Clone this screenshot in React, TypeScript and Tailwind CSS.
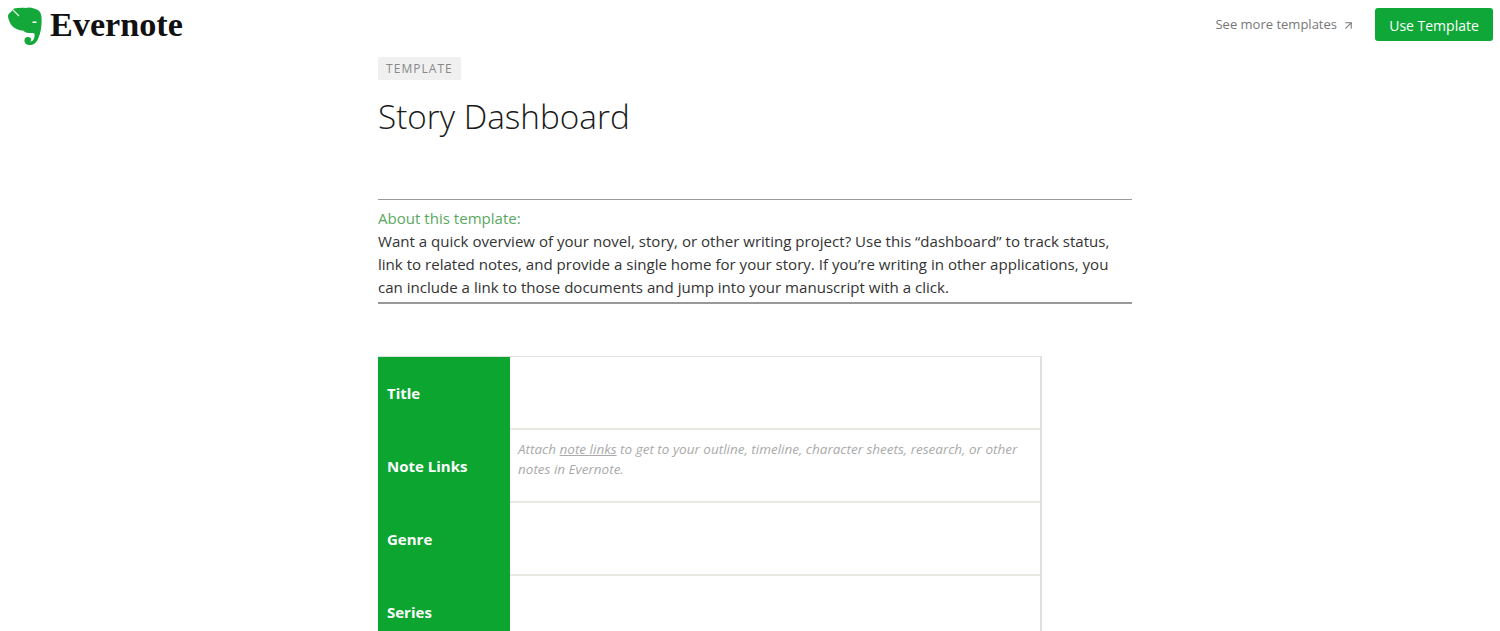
import { ArrowUpRight } from 'lucide-react';

const rows = [
  { label: 'Title' },
  { label: 'Note Links', note: true },
  { label: 'Genre' },
  { label: 'Series' },
];

function Logo() {
  return (
    <svg width="34" height="39" viewBox="0 0 34 39" className="shrink-0">
      <path
        d="M6 1.5 C10 .5 15 .5 18 1 C20 0 23 .5 26 1.5 C30 2.5 33 4 33.5 10 C34 17 33 26 30 32 C28 37 24 38.5 21 38 C17 37.5 15.5 34 17 31.5 C18.5 29.5 22 29.5 23 32 C23.5 33 23 34 22 34.5 C25 35 27 31 26.5 27 C26 25.5 24 26 21 26 C18 26 16 24.5 15 23.5 C11 23.5 6 21.5 3 17.5 C1 14 0 11 0 9 C0 7 1.5 6 3 5 Z"
        fill="#14a83b"
      />
      <path d="M5 3 L11 9" stroke="#d8f2de" strokeWidth="1.2" fill="none" />
      <rect x="24.5" y="14.5" width="4" height="1.5" fill="#ffffff" />
    </svg>
  );
}

export default function App() {
  return (
    <div className="h-[631px] overflow-hidden bg-white font-['Open_Sans',sans-serif]">
      <header className="flex h-[50px] items-start justify-between pl-2 pr-[7px]">
        <div className="flex items-start gap-[8px] pt-[7px]">
          <Logo />
          <span className="mt-px font-['Liberation_Serif',serif] text-[34.2px] leading-[34px] font-bold text-[#111111]">
            Evernote
          </span>
        </div>
        <div className="flex items-center pt-2">
          <a className="mt-px text-[13px] text-[#777777]">See more templates</a>
          <ArrowUpRight size={13} strokeWidth={2} className="mt-px ml-[5px] text-[#777777]" />
          <button className="ml-[20px] h-[33px] w-[118px] rounded-[3px] bg-[#0fa838] pt-px text-[14px] text-white">
            Use Template
          </button>
        </div>
      </header>

      <main className="ml-[378px] w-[754px]">
        <span className="mt-[7px] inline-block h-[23px] bg-[#f0f0f0] px-2 text-xs leading-[23px] tracking-[1.05px] text-[#888888]">
          TEMPLATE
        </span>
        <h1 className="mt-[13px] text-[33.3px] leading-[46px] font-light text-[#1a1a1a]">Story Dashboard</h1>

        <section className="mt-[60px] border-t border-b-2 border-[#999999] pt-[7px] pb-[3px] text-[15.07px] leading-[23px] text-[#333333]">
          <p className="text-[#5aa85f]">About this template:</p>
          <p>
            Want a quick overview of your novel, story, or other writing project? Use this “dashboard” to track status,
            link to related notes, and provide a single home for your story. If you’re writing in other applications, you
            can include a link to those documents and jump into your manuscript with a click.
          </p>
        </section>

        <div className="mt-[52px] w-[664px] border-t border-r-2 border-[#dfdfdf]">
          {rows.map((row) => (
            <div key={row.label} className="flex h-[73px]">
              <div className="flex w-[132px] shrink-0 items-center bg-[#0ba52f] px-[9px] text-[15px] font-bold text-white">
                {row.label}
              </div>
              <div className="flex-1 border-b-2 border-[#e8e8e2] px-2 pt-[9px] text-[13.5px] leading-[20px] text-[#aaaaaa] italic">
                {row.note && (
                  <p>
                    Attach <span className="underline">note links</span> to get to your outline, timeline, character
                    sheets, research, or other notes in Evernote.
                  </p>
                )}
              </div>
            </div>
          ))}
        </div>
      </main>
    </div>
  );
}
